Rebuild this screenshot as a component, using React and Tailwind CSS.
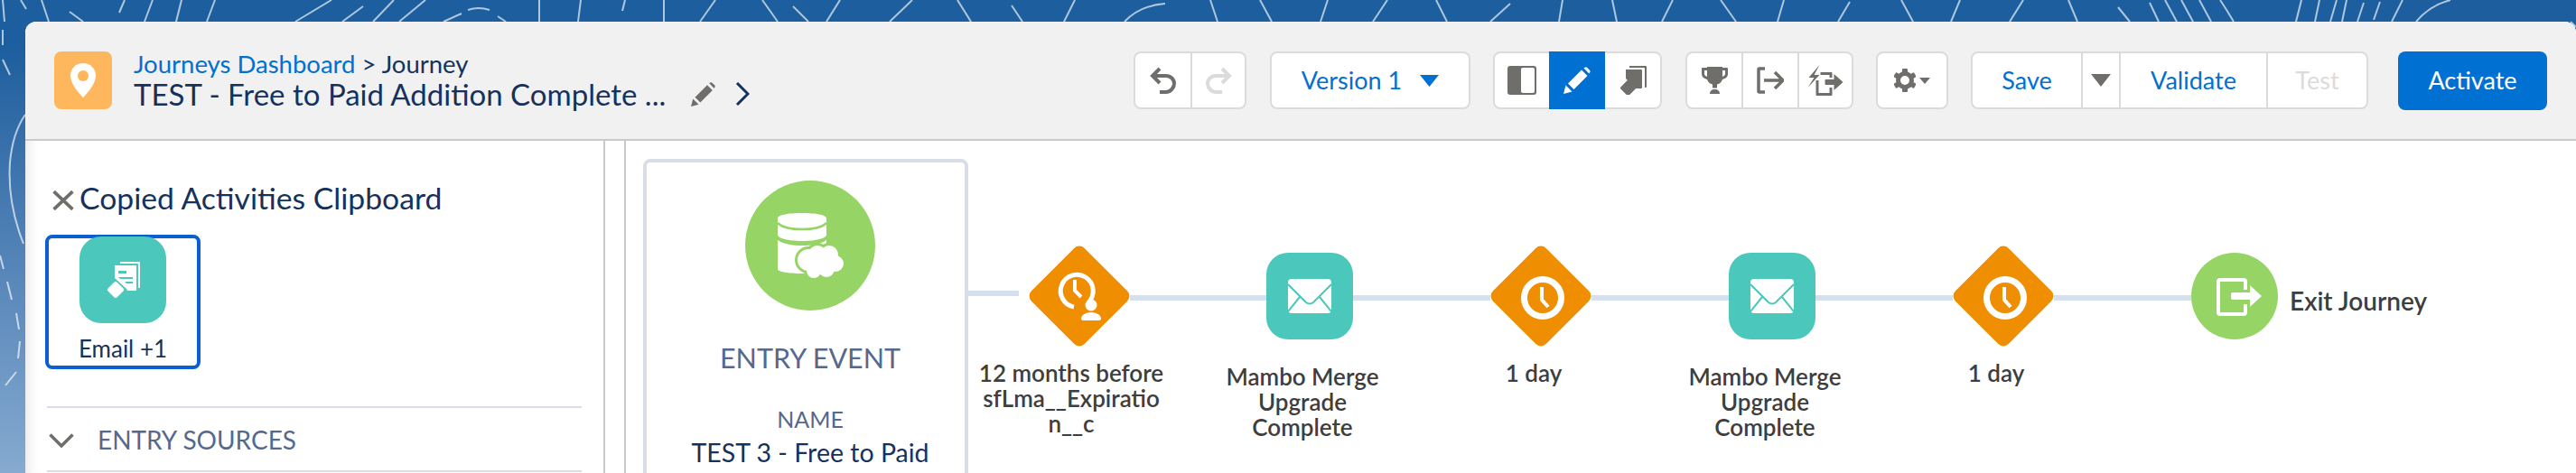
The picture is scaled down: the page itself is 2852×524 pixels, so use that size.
import React from 'react';

// white contour lines of the page background, only the strips around the panel show
const contours = [
  'M3 0 5 24', 'M23 0 29 10', 'M46 0 54 24', 'M77 13 92 24', 'M138 0 132 14', 'M169 0 160 24', 'M201 0 195 24', 'M238 0 229 24',
  'M367 0 327 24', 'M402 7 379 24', 'M436 0 413 24', 'M471 0 442 24', 'M511 15 491 24', 'M518 11Q530 7 542 11', 'M551 18 560 24',
  'M597 0V24', 'M643 0 640 24', 'M692 0 689 12', 'M735 0V24', 'M775 24 792 0', 'M844 0 861 24', 'M878 7 895 24',
  'M930 0 915 24', 'M985 24 1010 0', 'M1060 0 1075 24', 'M1120 6 1132 24', 'M1190 0 1178 24', 'M1245 24Q1262 6 1290 4', 'M1340 0 1348 24',
  'M1395 0 1408 24', 'M1470 0 1462 24', 'M1520 24 1536 0', 'M1590 0 1602 24', 'M1650 24 1672 4', 'M1730 0 1726 24', 'M1785 0 1790 24',
  'M1840 24 1852 0', 'M1905 0 1922 24', 'M1975 0 1968 24', 'M2035 24 2048 2', 'M2105 0 2118 24', 'M2170 0 2160 24', 'M2225 24 2240 0',
  'M2290 0 2300 24', 'M2345 8 2358 24', 'M2380 3 2390 24', 'M2397 0 2410 24', 'M2415 0 2428 24', 'M2435 0 2448 24', 'M2458 0Q2466 12 2473 24',
  'M2548 0 2542 24', 'M2568 0 2563 24', 'M2587 0 2580 24', 'M2598 0 2593 24', 'M2617 3 2610 24', 'M2635 2 2628 22', 'M2660 0 2648 24',
  'M2713 0Q2690 6 2675 24', 'M2846 24 2852 30',
  'M3 33V50', 'M3 66 11 83', 'M28 127Q14 147 11 180Q8 225 26 270', 'M0 283 4 298', 'M8 312 13 332', 'M18 347 21 365', 'M22 378 20 397', 'M18 412 6 427',
];

function PageBackground() {
  return (
    <svg className="absolute inset-0" width="2852" height="524" fill="none" stroke="#ffffff" strokeOpacity="0.65" strokeWidth="2">
      {contours.map((d) => (
        <path key={d} d={d} />
      ))}
    </svg>
  );
}

function BtnGroup({ className, children }) {
  return <div className={`flex h-[64px] rounded-lg border-2 border-[#dddbda] bg-white ${className}`}>{children}</div>;
}

function Undo({ flip }) {
  return (
    <svg width="30" height="30" viewBox="0 0 30 30" fill="none" stroke={flip ? '#dddbda' : '#706e6b'} strokeWidth="4" className={flip ? '-scale-x-100' : ''}>
      <path d="M11 2 3 10l8 8M3 10h15c5 0 9 4 9 8.5S23 28 18 28h-7" />
    </svg>
  );
}

function PanelIcon() {
  return (
    <svg width="32" height="32" viewBox="0 0 32 32">
      <rect width="32" height="32" rx="3" fill="#706e6b" />
      <rect x="15" y="2" width="15" height="28" rx="2" fill="#ffffff" />
    </svg>
  );
}

function PencilIcon({ color, size }) {
  return (
    <svg width={size} height={size} viewBox="0 0 30 30" fill={color}>
      <path d="M0 30 2.500 20.500 9.500 27.500Z" />
      <path d="M5 18.500 20 3.500 26.500 10 11.500 25Z" />
      <path d="M22.500 1.500 24 0.400Q25 0 26 0.800L29.200 4Q30 5 29.400 6L28.300 7.600Z" />
    </svg>
  );
}

function CopyIcon({ color }) {
  return (
    <svg width="30" height="32" viewBox="0 0 30 32" fill={color}>
      <path d="M11 0h18a1 1 0 0 1 1 1v22a1 1 0 0 1-1 1h-1V3a1 1 0 0 0-1-1H11z" />
      <path d="M7 4h17a1 1 0 0 1 1 1v19a1 1 0 0 1-1 1h-6L7 14z" />
      <rect x="3" y="18" width="13" height="13" rx="1.500" transform="rotate(45 9.500 24.500)" />
    </svg>
  );
}

function TrophyIcon() {
  return (
    <svg width="29" height="30" viewBox="0 0 29 30" fill="#706e6b">
      <path d="M6 0h17v1h5a1 1 0 0 1 1 1v6c0 3-2 5-6 6-1 3-3 5-6 5.500v4h-5v-4C9 19 7 17 6 14c-4-1-6-3-6-6V2a1 1 0 0 1 1-1h5zM3 4v4c0 1 1 2 3 3V4zm23 0h-3v7c2-1 3-2 3-3z" />
      <path d="M9 30c0-3 2-5 5.500-5S20 27 20 30z" />
    </svg>
  );
}

function ExitOutIcon() {
  return (
    <svg width="30" height="30" viewBox="0 0 30 30" fill="none" stroke="#706e6b" strokeWidth="3.500">
      <path d="M9 2H3a1 1 0 0 0-1 1v24a1 1 0 0 0 1 1h6" />
      <path d="M8 15h20M20 6l9 9-9 9" />
    </svg>
  );
}

function TransferIcon() {
  return (
    <svg width="40" height="34" viewBox="0 0 39 34" fill="#706e6b">
      <path d="M13 0 1 14h6L0 25l13-14H7z" />
      <path d="M14 8h12a1 1 0 0 1 1 1v5h-3v-3H14zM9 17h3v14h12v-6h3v8a1 1 0 0 1-1 1H10a1 1 0 0 1-1-1z" />
      <path d="M20 16h9v-6l10 9-10 9v-6h-9a1 1 0 0 1-1-1v-4a1 1 0 0 1 1-1z" />
    </svg>
  );
}

function GearIcon() {
  return (
    <svg width="24" height="26" viewBox="0 0 24 26">
      <circle cx="12" cy="13" r="7.500" fill="none" stroke="#706e6b" strokeWidth="5" />
      {[0, 60, 120, 180, 240, 300].map((a) => (
        <rect key={a} x="9" y="0" width="6" height="6" rx="1" fill="#706e6b" transform={`rotate(${a} 12 13)`} />
      ))}
    </svg>
  );
}

function Triangle({ color, w, h }) {
  return (
    <svg width={w} height={h} viewBox="0 0 20 12" preserveAspectRatio="none" fill={color}>
      <path d="M0 0h20L10 12z" />
    </svg>
  );
}

function PinTile() {
  return (
    <div className="flex h-[64px] w-[64px] shrink-0 items-center justify-center rounded-lg bg-[#ffb75d]">
      <svg width="28" height="38" viewBox="0 0 28 38">
        <path d="M14 0C6 0 0 6 0 14c0 8 8 18 14 24 6-6 14-16 14-24C28 6 22 0 14 0z" fill="#ffffff" />
        <circle cx="14" cy="14" r="6" fill="#ffb75d" />
      </svg>
    </div>
  );
}

function Header() {
  return (
    <header className="flex h-[132px] shrink-0 items-center border-b-2 border-[#c9c9c9] bg-[#f1f1f1] pl-[32px]">
      <PinTile />
      <div className="ml-[24px] w-[600px] shrink-0">
        <div className="text-[27.500px] leading-[30px] text-[#16325c]">
          <span className="text-[#0070d2]">Journeys Dashboard</span> &gt; Journey
        </div>
        <div className="whitespace-nowrap text-[33px] leading-[36px] text-[#16325c]">TEST - Free to Paid Addition Complete ...</div>
      </div>
      <span className="ml-[17px] mt-[30px] shrink-0">
        <PencilIcon color="#706e6b" size={27} />
      </span>
      <svg width="16" height="26" viewBox="0 0 16 26" fill="none" stroke="#16325c" strokeWidth="3" className="ml-[22px] mt-[30px] shrink-0">
        <path d="M2 1 14 13 2 25" />
      </svg>

      <BtnGroup className="ml-[425px] w-[125px]">
        <div className="flex w-[61px] items-center justify-center"><Undo /></div>
        <div className="flex w-[60px] items-center justify-center border-l-2 border-[#dddbda]"><Undo flip /></div>
      </BtnGroup>
      <BtnGroup className="ml-[26px] w-[222px] items-center justify-center gap-[20px] text-[27px] text-[#0070d2]">
        Version 1
        <Triangle color="#0070d2" w={21} h={13} />
      </BtnGroup>
      <BtnGroup className="ml-[25px] w-[187px]">
        <div className="flex w-[60px] items-center justify-center"><PanelIcon /></div>
        <div className="-my-[2px] flex w-[62px] items-center justify-center bg-[#0070d2]"><PencilIcon color="#ffffff" size={30} /></div>
        <div className="flex w-[61px] items-center justify-center"><CopyIcon color="#706e6b" /></div>
      </BtnGroup>
      <BtnGroup className="ml-[26px] w-[186px]">
        <div className="flex w-[60px] items-center justify-center"><TrophyIcon /></div>
        <div className="flex w-[62px] items-center justify-center border-l-2 border-[#dddbda]"><ExitOutIcon /></div>
        <div className="flex w-[60px] items-center justify-center border-l-2 border-[#dddbda]"><TransferIcon /></div>
      </BtnGroup>
      <BtnGroup className="ml-[25px] w-[80px] items-center justify-center gap-[4px]">
        <GearIcon />
        <Triangle color="#706e6b" w={12} h={7} />
      </BtnGroup>
      <BtnGroup className="ml-[25px] w-[440px] text-[27px] text-[#0070d2]">
        <div className="flex w-[120px] items-center justify-center">Save</div>
        <div className="flex w-[42px] items-center justify-center border-l-2 border-[#dddbda]"><Triangle color="#706e6b" w={22} h={14} /></div>
        <div className="flex w-[163px] items-center justify-center border-l-2 border-[#dddbda]">Validate</div>
        <div className="flex w-[111px] items-center justify-center border-l-2 border-[#dddbda] text-[#dddbda]">Test</div>
      </BtnGroup>
      <button className="ml-[33px] h-[65px] w-[165px] rounded-lg bg-[#0070d2] text-[27px] text-white">Activate</button>
    </header>
  );
}

function Sidebar() {
  return (
    <aside className="w-[642px] shrink-0 border-r-2 border-[#c9c9c9] pt-[47px] shadow-[inset_14px_0_14px_-12px_rgba(0,0,0,0.12)]">
      <div className="flex items-center pl-[30px]">
        <svg width="24" height="22" viewBox="0 0 23 21" stroke="#706e6b" strokeWidth="3.500" fill="none" className="mt-[6px]">
          <path d="M1.500 1 21.500 20M21.500 1 1.500 20" />
        </svg>
        <h2 className="ml-[6px] whitespace-nowrap text-[33.700px] leading-[32px] text-[#16325c]">Copied Activities Clipboard</h2>
      </div>
      <div className="ml-[22px] mt-[25px] flex h-[149px] w-[172px] flex-col items-center rounded-lg border-[4px] border-[#0b5fd0]">
        <div className="-mt-[2px] flex h-[96px] w-[96px] items-center justify-center rounded-[24px] bg-[#4bc7bc]">
          <svg width="37" height="40" viewBox="0 0 37 40" fill="#ffffff">
            <path d="M15 0h21a1 1 0 0 1 1 1v27a1 1 0 0 1-1 1h-1V3a1 1 0 0 0-1-1H15z" />
            <path d="M9 4h23a1 1 0 0 1 1 1v26a1 1 0 0 1-1 1h-9l-1-2-13-12V5a1 1 0 0 1 0-1zM13 10v3h9v-3zm0 7 2 2h14v-2zm7 5 2 2h7v-2z" fillRule="evenodd" />
            <rect x="3" y="24" width="14" height="14" rx="2" transform="rotate(45 10 31)" />
          </svg>
        </div>
        <span className="mt-[14px] text-[26px] leading-[28px] text-[#16325c]">Email +1</span>
      </div>
      <div className="ml-[24px] mr-[24px] mt-[41px] flex h-[73px] items-center border-y-2 border-[#d8dde6] text-[28px] text-[#54698d]">
        <svg width="28" height="16" viewBox="0 0 28 16" fill="none" stroke="#706e6b" strokeWidth="3.500" className="ml-[2px] mt-[2px]">
          <path d="M1.500 1.500 14 14 26.500 1.500" />
        </svg>
        <span className="ml-[26px]">ENTRY SOURCES</span>
      </div>
    </aside>
  );
}

function EntryCard() {
  return (
    <div className="mt-[20px] h-[400px] w-[360px] shrink-0 rounded-lg border-[4px] border-[#d8dde6] pl-[10px] pt-[20px] text-center">
      <svg width="144" height="144" viewBox="0 0 144 144" className="mx-auto">
        <circle cx="72" cy="72" r="72" fill="#96d465" />
        <path d="M36 42c0-4 12-6 27-6s27 2 27 6v18c0 4-12 7-27 7s-27-3-27-7zM36 66c6 4 16 6 27 6s21-2 27-6v32c0 3-12 5-27 5s-27-2-27-5z" fill="#ffffff" />
        <path d="M36 47c5 5 16 7 27 7s22-2 27-7" fill="none" stroke="#96d465" strokeWidth="2.500" />
        {/* cloud: green halo first, white lobes on top so no inner outlines show */}
        <g fill="#96d465">
          <circle cx="70" cy="88" r="15" />
          <circle cx="80" cy="82" r="13" />
          <circle cx="93" cy="82" r="13" />
          <circle cx="100" cy="92" r="12" />
          <circle cx="90" cy="98" r="12" />
          <circle cx="76" cy="100" r="11" />
        </g>
        <g fill="#ffffff">
          <circle cx="70" cy="88" r="12" />
          <circle cx="80" cy="82" r="10" />
          <circle cx="93" cy="82" r="10" />
          <circle cx="100" cy="92" r="9" />
          <circle cx="90" cy="98" r="9" />
          <circle cx="76" cy="100" r="8" />
          <circle cx="85" cy="90" r="11" />
        </g>
      </svg>
      <div className="mt-[34px] text-[30.500px] leading-[36px] text-[#54698d]">ENTRY EVENT</div>
      <div className="mt-[36px] text-[25px] leading-[28px] text-[#54698d]">NAME</div>
      <div className="mt-[6px] whitespace-nowrap text-[28.500px] leading-[34px] text-[#16325c]">TEST 3 - Free to Paid</div>
    </div>
  );
}

function Line({ className }) {
  return <div className={`mt-[4px] h-[6px] bg-[#d4e0ef] ${className}`} />;
}

function Diamond({ children }) {
  return (
    <svg width="112" height="112" viewBox="0 0 112 112" className="shrink-0">
      <rect x="14.500" y="14.500" width="83" height="83" rx="8" fill="#ef8e00" transform="rotate(45 56 56)" />
      {children}
    </svg>
  );
}

function ClockMark() {
  return (
    <g fill="none" stroke="#ffffff">
      <circle cx="58" cy="58" r="20.500" strokeWidth="7" />
      <path d="M57 46v14l7 8" strokeWidth="4" />
    </g>
  );
}

function ClockPersonMark() {
  return (
    <g>
      <path d="M66 63A18 18 0 1 0 50 68" fill="none" stroke="#ffffff" strokeWidth="5" />
      <path d="M51 38v12l7 7" fill="none" stroke="#ffffff" strokeWidth="4" />
      <circle cx="69" cy="66" r="6.500" fill="#ffffff" />
      <path d="M58 81c0-4 5-7 11-7s11 3 11 7c0 1-1 2-2 2H60c-1 0-2-1-2-2z" fill="#ffffff" />
    </g>
  );
}

function MailTile() {
  return (
    <div className="flex h-[96px] w-[96px] shrink-0 items-center justify-center rounded-[24px] bg-[#4bc7bc]">
      <svg width="48" height="38" viewBox="0 0 48 38">
        <rect width="48" height="38" rx="4" fill="#ffffff" />
        <path d="M0 6 20 26Q24 29 28 26L48 6M0 36 13 20M48 36 35 20" fill="none" stroke="#4bc7bc" strokeWidth="2" />
      </svg>
    </div>
  );
}

// one step of the flow: line, icon, line, with the caption underneath
function Step({ icon, label, labelTop, wide }) {
  return (
    <div className={`shrink-0 ${wide ? 'w-[250px]' : 'w-[256px]'}`}>
      <div className="flex h-[112px] items-center">
        {wide ? (
          <>
            <div className="mb-[6px] h-[6px] w-[56px] bg-[#d4e0ef]" />
            <div className="ml-[11px]">{icon}</div>
          </>
        ) : (
          <>
            <Line className="flex-1" />
            {icon}
          </>
        )}
        <Line className="flex-1" />
      </div>
      <div className={`whitespace-nowrap text-center text-[26px] font-semibold leading-[28px] text-[#3e3e3c] ${labelTop} ${wide ? 'w-[228px]' : 'pr-[16px]'}`}>
        {label}
      </div>
    </div>
  );
}

function Flow() {
  return (
    <div className="mt-[116px] flex items-start">
      <Step
        wide
        icon={<Diamond><ClockPersonMark /></Diamond>}
        labelTop="mt-[15px]"
        label={<>12 months before<br />sfLma__Expiratio<br />n__c</>}
      />
      <Step icon={<MailTile />} labelTop="mt-[19px]" label={<>Mambo Merge<br />Upgrade<br />Complete</>} />
      <Step icon={<Diamond><ClockMark /></Diamond>} labelTop="mt-[15px]" label="1 day" />
      <Step icon={<MailTile />} labelTop="mt-[19px]" label={<>Mambo Merge<br />Upgrade<br />Complete</>} />
      <Step icon={<Diamond><ClockMark /></Diamond>} labelTop="mt-[15px]" label="1 day" />
      <div className="flex h-[112px] items-center">
        <Line className="w-[80px]" />
        <svg width="96" height="96" viewBox="0 0 96 96" className="shrink-0">
          <circle cx="48" cy="48" r="48" fill="#96d465" />
          <path d="M60 41V32a2 2 0 0 0-2-2H32a2 2 0 0 0-2 2v34a2 2 0 0 0 2 2h26a2 2 0 0 0 2-2v-9" fill="none" stroke="#ffffff" strokeWidth="4" />
          <path d="M46 44h19v-8l13 12-13 12v-8H46a2 2 0 0 1-2-2v-4a2 2 0 0 1 2-2z" fill="#ffffff" />
        </svg>
        <span className="ml-[13px] mt-[10px] whitespace-nowrap text-[28px] font-semibold text-[#3e3e3c]">Exit Journey</span>
      </div>
    </div>
  );
}

export default function App() {
  return (
    <div className="relative h-[524px] w-[2852px] overflow-hidden bg-gradient-to-b from-[#1c5e9e] from-10% to-[#86aad0] font-['Lato',sans-serif]">
      <PageBackground />
      <div className="relative ml-[28px] mt-[24px] flex h-[500px] flex-col overflow-hidden rounded-t-[12px] bg-white">
        <Header />
        <div className="flex min-h-0 flex-1">
          <Sidebar />
          <div className="ml-[21px] flex flex-1 border-l-2 border-[#c9c9c9] pl-[19px]">
            <EntryCard />
            <Flow />
          </div>
        </div>
      </div>
    </div>
  );
}
